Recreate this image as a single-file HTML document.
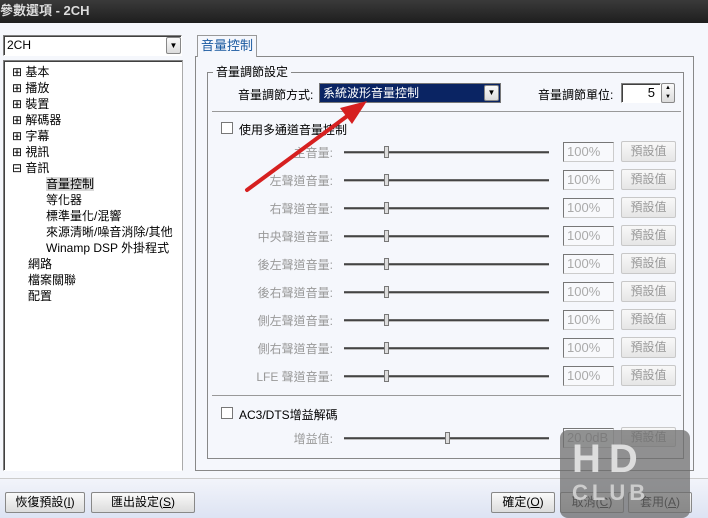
<!DOCTYPE html>
<html><head><meta charset="utf-8"><style>
*{margin:0;padding:0;box-sizing:border-box}
body{width:708px;height:518px;overflow:hidden;background:#f5f7fc;font-family:"Liberation Sans","Noto Sans CJK TC",sans-serif;font-size:12px;color:#000;position:relative}
.a{position:absolute}
.title{left:0;top:0;width:708px;height:23px;background:linear-gradient(#3a3a3a,#1e1e1e);color:#ddd;font-weight:bold;font-size:13px;line-height:22px;padding-left:0}
.sunk{border:1px solid;border-color:#808080 #fff #fff #808080;box-shadow:inset 1px 1px 0 #404040;background:#fff}
.btn{border:1px solid #888;border-radius:2px;background:linear-gradient(#fafafa,#dcdcdc);text-align:center;line-height:18px}
.gbtn{border:1px solid #c8c8c8;border-radius:2px;background:linear-gradient(#f8f8f8,#e6e6e6);color:#999;text-align:center;line-height:18px}
.lab{color:#999;text-align:right;width:140px}
.track{height:3px;border-top:1px solid #666;border-bottom:1px solid #bbb;background:#444}
.thumb{width:5px;height:12px;border:1px solid #777;background:#ddd}
.tb{width:51px;height:20px;border:1px solid;border-color:#777 #ccc #ccc #777;color:#aaa;font-size:13px;line-height:18px;padding-left:3px;background:#f8f9fc}
.tree div{height:16px;line-height:16px}
</style></head><body>
<div class="a title">參數選項 - 2CH</div>
<div class="a sunk" style="left:3px;top:35px;width:179px;height:21px;line-height:19px;padding-left:3px">2CH</div>
<div class="a btn" style="left:166px;top:37px;width:15px;height:17px;font-size:8px;line-height:15px">▼</div>
<div class="a sunk tree" style="left:3px;top:60px;width:180px;height:411px;padding:3px 0 0 8px;border-right:1px solid #aaa">
<div>⊞ 基本</div><div>⊞ 播放</div><div>⊞ 裝置</div><div>⊞ 解碼器</div><div>⊞ 字幕</div><div>⊞ 視訊</div><div>⊟ 音訊</div>
<div style="padding-left:34px"><span style="background:#d8d8d8">音量控制</span></div>
<div style="padding-left:34px">等化器</div><div style="padding-left:34px">標準量化/混響</div><div style="padding-left:34px">來源清晰/噪音消除/其他</div><div style="padding-left:34px">Winamp DSP 外掛程式</div>
<div style="padding-left:16px">網路</div><div style="padding-left:16px">檔案關聯</div><div style="padding-left:16px">配置</div>
</div>
<div class="a" style="left:195px;top:56px;width:499px;height:415px;border:1px solid #888;background:#f5f7fc"></div>
<div class="a" style="left:197px;top:35px;width:60px;height:22px;border:1px solid #999;border-bottom:none;background:#f5f7fc;color:#1a5aa0;text-align:center;line-height:20px;font-size:13px">音量控制</div>
<div class="a" style="left:207px;top:72px;width:477px;height:387px;border:1px solid #888"></div>
<div class="a" style="left:213px;top:63px;background:#f5f7fc;padding:0 3px">音量調節設定</div>
<div class="a" style="left:238px;top:86px">音量調節方式:</div>
<div class="a" style="left:319px;top:83px;width:182px;height:20px;border:1px solid #777;background:#0a2463;color:#fff;line-height:18px;padding-left:3px">系統波形音量控制</div>
<div class="a btn" style="left:484px;top:85px;width:15px;height:16px;font-size:8px;line-height:14px">▼</div>
<div class="a" style="left:538px;top:86px">音量調節單位:</div>
<div class="a sunk" style="left:621px;top:83px;width:40px;height:20px;text-align:right;padding-right:5px;line-height:18px;font-size:13px">5</div>
<div class="a btn" style="left:661px;top:83px;width:14px;height:20px;font-size:6px;line-height:9px">▲<br>▼</div>
<div class="a" style="left:212px;top:111px;width:469px;border-top:1px solid #999"></div>
<div class="a" style="left:221px;top:122px;width:12px;height:12px;border:1px solid #777;background:#fff"></div>
<div class="a" style="left:239px;top:121px">使用多通道音量控制</div>
<div id="rows"></div>
<div class="a" style="left:212px;top:395px;width:469px;border-top:1px solid #999"></div>
<div class="a" style="left:221px;top:407px;width:12px;height:12px;border:1px solid #777;background:#fff"></div>
<div class="a" style="left:239px;top:406px">AC3/DTS增益解碼</div>
<div class="a lab" style="left:193px;top:430px">增益值:</div>
<div class="a track" style="left:344px;top:437px;width:205px"></div>
<div class="a thumb" style="left:445px;top:432px"></div>
<div class="a tb" style="left:563px;top:428px">20.0dB</div>
<div class="a gbtn" style="left:621px;top:427px;width:55px;height:20px">預設值</div>
<div class="a" style="left:0;top:478px;width:708px;height:40px;background:linear-gradient(#f2f4fa,#dde3f3);border-top:1px solid #ccc"></div>
<div class="a btn" style="left:5px;top:492px;width:80px;height:21px">恢復預設(<u>I</u>)</div>
<div class="a btn" style="left:91px;top:492px;width:104px;height:21px">匯出設定(<u>S</u>)</div>
<div class="a btn" style="left:491px;top:492px;width:64px;height:21px">確定(<u>O</u>)</div>
<div class="a btn" style="left:560px;top:492px;width:64px;height:21px">取消(<u>C</u>)</div>
<div class="a btn" style="left:628px;top:492px;width:64px;height:21px">套用(<u>A</u>)</div>
<div class="a" style="left:560px;top:430px;width:130px;height:88px;background:rgba(110,110,110,.75);border-radius:8px"></div>
<div class="a" style="left:572px;top:438px;width:108px;height:42px;font:bold 40px 'Liberation Sans',sans-serif;color:#ddd;letter-spacing:8px;line-height:42px">HD</div>
<div class="a" style="left:572px;top:480px;width:108px;font:bold 22px 'Liberation Sans',sans-serif;color:#ccc;letter-spacing:4px">CLUB</div>
<svg class="a" style="left:0;top:0" width="708" height="518"><line x1="247" y1="190" x2="350" y2="114" stroke="#d62020" stroke-width="4" stroke-linecap="round"/><polygon points="367,101 340,108 352,124" fill="#d62020"/></svg>
<script>
var L=["主音量:","左聲道音量:","右聲道音量:","中央聲道音量:","後左聲道音量:","後右聲道音量:","側左聲道音量:","側右聲道音量:","LFE 聲道音量:"],h="";
L.forEach(function(t,i){var y=152+i*28;h+='<div class="a lab" style="left:193px;top:'+(y-8)+'px">'+t+'</div><div class="a track" style="left:344px;top:'+(y-1)+'px;width:205px"></div><div class="a thumb" style="left:384px;top:'+(y-6)+'px"></div><div class="a tb" style="left:563px;top:'+(y-10)+'px">100%</div><div class="a gbtn" style="left:621px;top:'+(y-11)+'px;width:55px;height:21px">預設值</div>';});
document.getElementById("rows").innerHTML=h;
</script>
</body></html>
